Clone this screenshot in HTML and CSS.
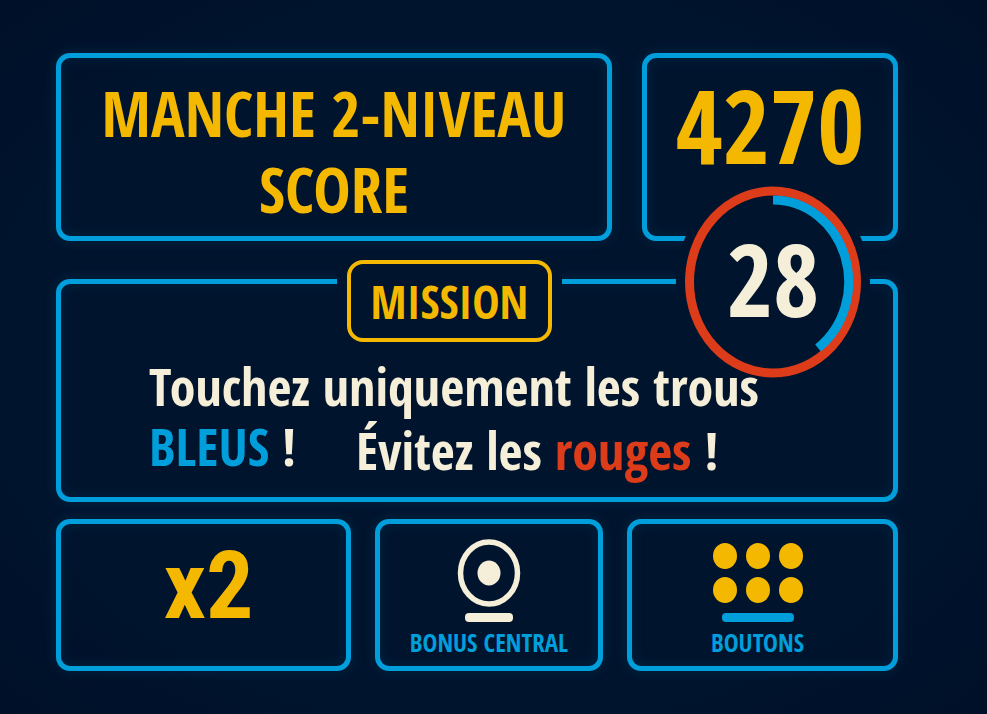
FILE: index.html
```html
<!DOCTYPE html>
<html lang="fr">
<head>
<meta charset="utf-8">
<meta name="viewport" content="width=device-width, initial-scale=1">
<title>Manche 2 - Niveau score</title>
<link rel="stylesheet" href="styles.css">
</head>
<body>
<main class="board">
  <header class="row row-top">
    <section class="panel heading">
      <h1 class="title">MANCHE 2-NIVEAU<br>SCORE</h1>
    </section>
    <section class="panel score">
      <p class="points">4270</p>
      <div class="timer">
        <svg class="timer-ring" viewBox="0 0 196 212" aria-hidden="true">
          <ellipse class="ring-mask" cx="98" cy="106" rx="97" ry="105"/>
          <ellipse class="ring-track" cx="98" cy="106" rx="83.5" ry="91"/>
          <path class="ring-progress" d="M98 24 A75.5 82 0 0 1 143 172"/>
        </svg>
        <span class="seconds">28</span>
      </div>
    </section>
  </header>

  <section class="panel mission">
    <div class="tag-gap"><h2 class="tag">MISSION</h2></div>
    <div class="brief">
      <p class="brief-line">Touchez uniquement les trous</p>
      <div class="brief-row">
        <p class="brief-line"><strong class="blue">BLEUS</strong> <span class="mark">!</span></p>
        <p class="brief-line brief-note">Évitez les <strong class="red">rouges</strong> !</p>
      </div>
    </div>
  </section>

  <div class="row row-bottom">
    <section class="panel multiplier">
      <p class="factor">x2</p>
    </section>
    <section class="panel feature">
      <svg class="icon-target" viewBox="0 0 64 84" aria-hidden="true">
        <ellipse cx="32" cy="34" rx="28.5" ry="31" fill="none" stroke="currentColor" stroke-width="5.5"/>
        <ellipse cx="32" cy="34" rx="11.5" ry="12.5" fill="currentColor"/>
        <rect x="8" y="74" width="48" height="9" rx="4" fill="currentColor"/>
      </svg>
      <p class="label">BONUS CENTRAL</p>
    </section>
    <section class="panel feature buttons">
      <svg class="icon-buttons" viewBox="0 0 92 84" aria-hidden="true">
        <g class="dots">
          <ellipse cx="13" cy="17" rx="12" ry="13"/>
          <ellipse cx="46" cy="17" rx="12" ry="13"/>
          <ellipse cx="79" cy="17" rx="12" ry="13"/>
          <ellipse cx="13" cy="51" rx="12" ry="13"/>
          <ellipse cx="46" cy="51" rx="12" ry="13"/>
          <ellipse cx="79" cy="51" rx="12" ry="13"/>
        </g>
        <rect class="bar" x="10" y="74" width="72" height="9" rx="4"/>
      </svg>
      <p class="label">BOUTONS</p>
    </section>
  </div>
</main>
</body>
</html>
```
FILE: styles.css
```css
:root {
  --bg: #00142d;
  --blue: #009fdb;
  --yellow: #f5b800;
  --cream: #f5eed9;
  --red: #dc3c19;
}

* { box-sizing: border-box; }

body {
  margin: 0;
  min-height: 100vh;
  background: radial-gradient(ellipse at center, var(--bg) 70%, #001029 100%);
  color: var(--cream);
  font-family: "Open Sans Condensed", "Roboto Condensed", "Open Sans", sans-serif;
  font-weight: 700;
}

h1, h2, p { margin: 0; font-weight: 700; }

.board {
  display: flex;
  flex-direction: column;
  padding: 53px 89px 44px 56px;
}

.row { display: grid; }
.row-top { grid-template-columns: 556fr 256fr; gap: 30px; }
.row-bottom { grid-template-columns: 295fr 228fr 271fr; gap: 24px; margin-top: 17px; }

.panel {
  border: 5px solid var(--blue);
  border-radius: 14px;
  box-shadow: 0 0 14px rgba(0, 159, 219, 0.14), inset 0 0 14px rgba(0, 159, 219, 0.12);
}

.heading { padding: 17px 16px 9px; text-align: center; }
.title { color: var(--yellow); font-size: 63px; line-height: 76px; }

.score { position: relative; text-align: center; }
.points { color: var(--yellow); font-size: 102px; line-height: 134px; }

.timer {
  position: absolute;
  z-index: 1;
  top: 118px;
  left: 50%;
  width: 196px;
  height: 212px;
  margin-left: -95px;
  display: grid;
  place-items: center;
}
.timer-ring, .seconds { grid-area: 1 / 1; }
.timer-ring { width: 100%; height: 100%; }
.ring-mask { fill: var(--bg); }
.ring-track { fill: none; stroke: var(--red); stroke-width: 9; }
.ring-progress { fill: none; stroke: var(--blue); stroke-width: 9; }
.seconds { font-size: 100px; line-height: 136px; padding-bottom: 8px; }

.mission {
  margin-top: 38px;
  padding-bottom: 17px;
  display: flex;
  flex-direction: column;
  align-items: center;
}
.tag-gap { background: var(--bg); padding: 0 10px; margin: -24px 55px 0 0; }
.tag {
  border: 4px solid var(--yellow);
  border-radius: 16px;
  padding: 5px 20px;
  color: var(--yellow);
  font-size: 46px;
  line-height: 64px;
}
.brief { position: relative; z-index: 2; margin: 14px 46px 0 0; }
.brief-line { font-size: 52px; line-height: 60px; }
.brief-row { display: flex; gap: 60px; }
.brief-note { padding-top: 4px; }
.blue { color: var(--blue); }
.red { color: var(--red); }
.mark { font-weight: 300; }

.multiplier { padding: 0 0 18px 10px; display: grid; place-items: center; }
.factor { color: var(--yellow); font-family: "Roboto Condensed", "Open Sans Condensed", sans-serif; font-size: 94px; line-height: 112px; }

.feature {
  padding: 15px 8px 9px;
  display: flex;
  flex-direction: column;
  align-items: center;
}
.buttons { padding-right: 18px; }
.icon-target { width: 64px; height: 84px; color: var(--cream); }
.icon-buttons { width: 92px; height: 84px; }
.dots { fill: var(--yellow); }
.bar { fill: var(--blue); }
.label { margin-top: 4px; color: var(--blue); font-size: 25px; line-height: 30px; white-space: nowrap; }
```
